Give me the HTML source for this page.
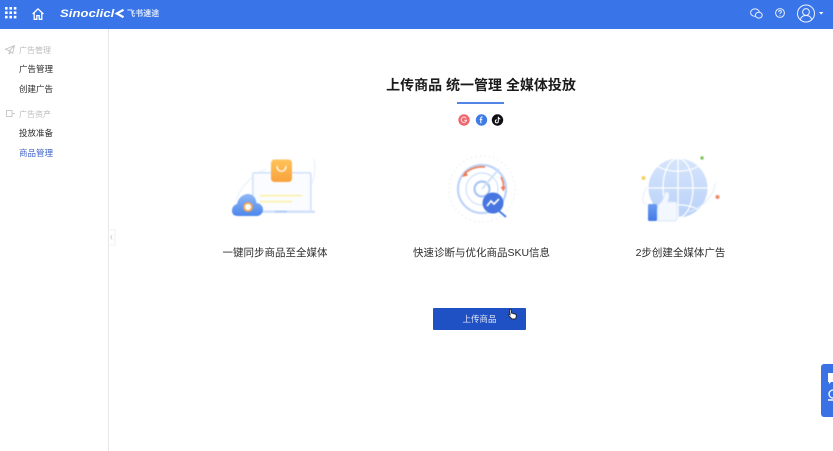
<!DOCTYPE html>
<html lang="zh"><head><meta charset="utf-8"><title>上传商品</title>
<style>
html,body{margin:0;padding:0;background:#fff}
body{width:833px;height:451px;position:relative;overflow:hidden;font-family:"Liberation Sans","Noto Sans CJK SC",sans-serif;color:#222}
#w{position:absolute;left:0;top:0;width:833px;height:451px;overflow:hidden;background:#fff;filter:blur(.3px)}
.a{position:absolute;white-space:nowrap;line-height:1}
svg{position:absolute;overflow:visible}
.b{filter:blur(.4px)}
</style></head><body><div id="w">
<div class="a" style="left:0;top:0;width:833px;height:29px;background:#3975e8"></div>
<svg style="left:5px;top:7px" width="12" height="12" fill="#fff"><rect x="0" y="0" width="2.6" height="2.6"/><rect x="4.4" y="0" width="2.6" height="2.6"/><rect x="8.8" y="0" width="2.6" height="2.6"/><rect x="0" y="4.4" width="2.6" height="2.6"/><rect x="4.4" y="4.4" width="2.6" height="2.6"/><rect x="8.8" y="4.4" width="2.6" height="2.6"/><rect x="0" y="8.8" width="2.6" height="2.6"/><rect x="4.4" y="8.8" width="2.6" height="2.6"/><rect x="8.8" y="8.8" width="2.6" height="2.6"/></svg>
<svg style="left:32px;top:8px" width="12" height="12" fill="none" stroke="#fff" stroke-width="1.3"><path d="M.6 6 6 .9 11.400 6M2.200 5V11.300H4.800V7.600H7.200V11.300H9.800V5"/></svg>
<div class="a" style="left:60px;top:6px;font:italic bold 13px/15px 'Liberation Sans',sans-serif;color:#fff;letter-spacing:.1px;transform:scale(1,.82);transform-origin:0 50%">Sinoclicl</div>
<svg style="left:115px;top:9px" width="9" height="9" fill="none" stroke="#fff" stroke-width="2.200"><path d="M8.500 .8 1.800 4.500l6.700 3.700"/></svg>
<div class="a" style="left:127px;top:8px;font-size:8px;line-height:11px;font-weight:700;color:#e0eafc;letter-spacing:.1px">飞书速途</div>
<svg style="left:750px;top:8px" width="13" height="12" fill="none" stroke="#e8effc" stroke-width="1"><ellipse cx="5" cy="4.600" rx="4.400" ry="3.700"/><ellipse cx="8.800" cy="7.200" rx="3.400" ry="2.900" fill="#3975e8"/></svg>
<svg style="left:775px;top:8px" width="10" height="10" fill="none" stroke="#e8effc" stroke-width="1"><circle cx="5" cy="5" r="4.400"/><path d="M3.600 4c0-2 2.800-2 2.800-.2 0 1-1.400 1-1.400 2.200M5 7v.8"/></svg>
<svg style="left:797px;top:4px" width="26" height="20" fill="none" stroke="#eef3fd" stroke-width="1"><circle cx="9" cy="9.500" r="8.500"/><circle cx="9" cy="8" r="3.400"/><path d="M3.500 15.500c.5-3 2.500-4 5.500-4s5 1 5.500 4"/><path d="M22 8h4.400l-2.200 2.600z" fill="#fff" stroke="none"/></svg>

<div class="a" style="left:108px;top:29px;width:1px;height:422px;background:#e6e8ec"></div>
<svg style="left:5px;top:45px" width="10" height="10" fill="none" stroke="#c4c4c4" stroke-width=".9"><path d="M.5 4.200 9.500.6 7.600 8.400 4.800 6 .5 4.200ZM9.500.6 4.200 6v3l1.800-2"/></svg>
<div class="a" style="left:19px;top:46px;font-size:8px;line-height:10px;color:#bcbcbc">广告管理</div>
<div class="a" style="left:19px;top:64px;font-size:8.500px;line-height:10px;color:#2c2c2c">广告管理</div>
<div class="a" style="left:19px;top:84px;font-size:8.500px;line-height:10px;color:#2c2c2c">创建广告</div>
<svg style="left:6px;top:110px" width="10" height="8" fill="none" stroke="#cbcbcb" stroke-width="1"><rect x=".5" y=".5" width="5.500" height="6"/><path d="M6.500 3.500h2.500"/></svg>
<div class="a" style="left:19px;top:110px;font-size:8px;line-height:10px;color:#bcbcbc">广告资产</div>
<div class="a" style="left:19px;top:128px;font-size:8.500px;line-height:10px;color:#2c2c2c">投放准备</div>
<div class="a" style="left:19px;top:148px;font-size:8.500px;line-height:10px;color:#3f63c8">商品管理</div>
<svg style="left:108px;top:229px" width="8" height="17" fill="none"><path d="M2 .5h5v15.500H2" stroke="#f0f1f3" stroke-width="1"/><path d="M4.200 6 2.600 8.200l1.600 2.200" stroke="#c4c7cc" stroke-width=".8"/></svg>

<div class="a" style="left:331px;top:76px;width:300px;text-align:center;font-size:14px;line-height:18px;font-weight:700;color:#1b1b1b">上传商品 统一管理 全媒体投放</div>
<div class="a" style="left:457px;top:102px;width:47px;height:2px;background:#5285e6"></div>
<svg style="left:458px;top:114px" width="46" height="12">
<circle cx="6" cy="6" r="5.700" fill="#ef686e"/><path d="M8.200 4.300A2.700 2.700 0 1 0 8.600 6.300H6.200" fill="none" stroke="#f9d6d7" stroke-width="1.100"/>
<circle cx="23.500" cy="6" r="5.700" fill="#3f7be6"/><path d="M24.600 3h-.8c-.7 0-1 .4-1 1.100V9.200M21.700 5.600h2.600" stroke="#fff" stroke-width="1" fill="none"/>
<circle cx="39.500" cy="6" r="5.700" fill="#101014"/><path d="M40.300 2.800v4.600a1.500 1.500 0 1 1-1.500-1.500M40.300 3c.2 1.100 1 1.800 2 1.900" stroke="#fff" stroke-width="1" fill="none"/>
</svg>

<!-- laptop -->
<svg class="b" style="left:228px;top:155px" width="92" height="68">
<defs>
<linearGradient id="o" x1="0" y1="0" x2="0" y2="1"><stop offset="0" stop-color="#ffc35a"/><stop offset="1" stop-color="#f9a23c"/></linearGradient>
<linearGradient id="c" x1="0" y1="0" x2="0" y2="1"><stop offset="0" stop-color="#8fb8f6"/><stop offset="1" stop-color="#4d86ec"/></linearGradient>
</defs>
<path d="M8 45C14 30 24 20 38 14M86 4C90 24 80 44 62 52" fill="none" stroke="#e6eefb" stroke-width="1"/>
<rect x="24.800" y="17.800" width="58" height="39" rx="1.500" fill="#fbfcff" stroke="#d3e2fb" stroke-width="1.600"/>
<rect x="12" y="55.500" width="75" height="2.500" fill="#d2e1fb"/>
<rect x="47" y="55.500" width="12" height="2" fill="#b5cdf4"/>
<rect x="32" y="39.500" width="42" height="2.200" fill="#fbf3bd"/>
<rect x="32" y="45.500" width="32" height="2.200" fill="#fbf3bd"/>
<rect x="43" y="4.500" width="21" height="22.500" rx="3.500" fill="url(#o)"/>
<path d="M49 11c0 7 9 7 9 0" fill="none" stroke="#fff" stroke-width="1.300"/>
<path d="M10 61c-5 0-6-3-6-5 0-4 2-6 5-7 1-6 6-10 11-10 5 0 8 4 8.500 9 4 .5 6.500 3 6.500 7 0 3-3 6-6 6z" fill="url(#c)"/>
<circle cx="20" cy="52" r="4" fill="#fff" stroke="#f2a552" stroke-width="1.800"/>
</svg>

<!-- radar -->
<svg class="b" style="left:449px;top:158px" width="66" height="62" fill="none">
<circle cx="33" cy="31" r="33" stroke="#e4e9f0" stroke-width="1" stroke-dasharray="1.500 3"/>
<circle cx="33" cy="31" r="24" stroke="#bcd3f8" stroke-width="2.200"/>
<circle cx="33" cy="31" r="16" stroke="#d6e4fa" stroke-width="1.400"/>
<circle cx="33" cy="31" r="7.500" stroke="#a9c6f4" stroke-width="2.200"/>
<path d="M33 31 50 11" stroke="#cfe0fa" stroke-width="1.800"/>
<path d="M16 15c6-5 14-7 20-6M52 19c2 4 3 7 2 11" stroke="#ef8460" stroke-width="1.700"/>
<path d="M13 19l3.500-6 2.500 4.500zM51.500 29l5-.5-2 5z" fill="#ef7a52"/>
<path d="M50 53l7 6" stroke="#4a7fe4" stroke-width="2"/>
<circle cx="44" cy="45" r="10.500" fill="#4776e0"/>
<path d="M38 48l4-5 3 3 5-5" stroke="#fff" stroke-width="1.700"/>
</svg>

<!-- globe -->
<svg class="b" style="left:638px;top:153px" width="86" height="70" fill="none">
<defs><linearGradient id="g" x1="0" y1="0" x2="0" y2="1"><stop offset="0" stop-color="#d6e5fc"/><stop offset="1" stop-color="#b9d1f9"/></linearGradient>
<linearGradient id="t" x1="0" y1="0" x2="0" y2="1"><stop offset="0" stop-color="#6c9cf4"/><stop offset="1" stop-color="#4379e6"/></linearGradient></defs>
<circle cx="40" cy="35" r="29.500" fill="url(#g)"/>
<g stroke="#fff" stroke-width="1.300"><path d="M40 5.500v59M10.500 35h59M19 13c12 7 30 7 42 0M19 57c12-7 30-7 42 0"/><ellipse cx="40" cy="35" rx="15" ry="29.500"/></g>
<path d="M9 34C3 44 4 49 8 52M77 30c0 12-12 24-26 29" stroke="#e4ecfb" stroke-width="1"/>
<circle cx="64" cy="5" r="1.700" fill="#7cc25d"/>
<circle cx="5.500" cy="25" r="2" fill="#f6d264"/>
<circle cx="79.500" cy="44" r="2" fill="#f08a6c"/>
<rect x="10" y="51" width="9" height="17" rx="1.500" fill="url(#t)"/>
<path d="M20 68V52c4-2 6-8 7-12 1-2 4-1 4 2 0 2-.5 5-1.500 7H37.500c1.500 0 1.500 2 1.500 3v13c0 2-1 3-3 3z" fill="#f3f7fe" stroke="#dbe7fb" stroke-width="1"/>
</svg>

<div class="a" style="left:175px;top:246.500px;width:200px;text-align:center;font-size:10.500px;line-height:13px;color:#2d2d2d">一键同步商品至全媒体</div>
<div class="a" style="left:381.500px;top:246.500px;width:200px;text-align:center;font-size:10.500px;line-height:13px;color:#2d2d2d">快速诊断与优化商品SKU信息</div>
<div class="a" style="left:580.500px;top:246.500px;width:200px;text-align:center;font-size:10.500px;line-height:13px;color:#2d2d2d">2步创建全媒体广告</div>

<div class="a" style="left:433px;top:308px;width:93px;height:22px;background:#1f50c4;border-radius:1px"></div>
<div class="a" style="left:433px;top:314px;width:93px;text-align:center;font-size:8.500px;line-height:11px;color:#e3e9f8">上传商品</div>
<svg style="left:507px;top:308px" width="11" height="14"><path d="M2.500 1.500c1-.8 1.800 0 1.800 1l.2 2.500 4 1.200c1 .4 1 1.200.8 2.300L8.500 11H5L1.800 7.500c-.4-.8.500-1.500 1.300-.8Z" fill="#fff" stroke="#222" stroke-width=".9"/></svg>

<div class="a" style="left:821px;top:364px;width:14px;height:53px;background:#3a72e6;border-radius:3px 0 0 3px"></div>
<svg style="left:828px;top:372px" width="5" height="30"><path d="M0 1h6v9H3l-2 2v-2H0z" fill="#fff"/><circle cx="5" cy="22" r="4" fill="none" stroke="#fff" stroke-width="1.300"/><path d="M0 28H6" stroke="#fff" stroke-width="1.500"/></svg>
</div></body></html>
